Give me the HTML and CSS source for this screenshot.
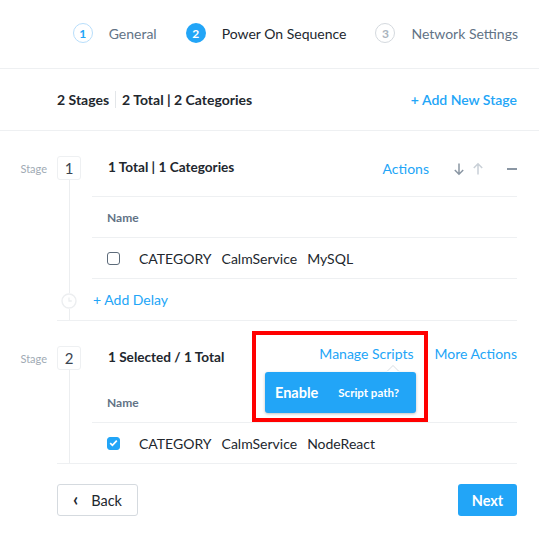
FILE: index.html
```html
<!DOCTYPE html>
<html>
<head>
<meta charset="utf-8">
<link rel="stylesheet" href="styles.css">
</head>
<body>
<header class="steps">
  <div class="step done"><span class="num">1</span><span class="label">General</span></div>
  <div class="step active"><span class="num">2</span><span class="label">Power On Sequence</span></div>
  <div class="step todo"><span class="num">3</span><span class="label">Network Settings</span></div>
</header>

<div class="summary">
  <div class="summary-text"><span class="stages">2 Stages</span><span class="divider"></span><span>2 Total | 2 Categories</span></div>
  <a class="link add-stage">+ Add New Stage</a>
</div>

<section class="stage">
  <div class="stage-label">Stage</div>
  <div class="stage-main">
    <div class="rail rail-top"><span class="stage-num">1</span><span class="vline"></span></div>
    <div class="stage-head head-1">
      <span class="stage-title">1 Total | 1 Categories</span>
      <div class="head-actions">
        <a class="link actions">Actions</a>
        <span class="arrow down">
          <svg width="12" height="14" viewBox="0 0 12 14"><path d="M6 1.5V12M1.8 8l4.2 4.2L10.2 8" fill="none" stroke="#8a96a3" stroke-width="1.5"/></svg>
        </span>
        <span class="arrow up">
          <svg width="12" height="14" viewBox="0 0 12 14"><path d="M6 12.5V2M1.8 6L6 1.8 10.2 6" fill="none" stroke="#c9d0d7" stroke-width="1.5"/></svg>
        </span>
        <span class="minus"></span>
      </div>
    </div>
    <div class="col-head">Name</div>
    <div class="item-row">
      <span class="checkbox"></span>
      <span class="item-text">CATEGORY<span class="sp"></span>CalmService<span class="sp"></span>MySQL</span>
    </div>
    <div class="rail rail-delay">
      <span class="vline short"></span>
      <svg class="clock" width="16" height="16" viewBox="0 0 16 16"><circle cx="8" cy="8" r="7" fill="#fff" stroke="#eceef0" stroke-width="1.4"/><path d="M8 4.5V8h2.8" fill="none" stroke="#eceef0" stroke-width="1.3"/></svg>
      <span class="vline"></span>
    </div>
    <div class="delay-row"><a class="link">+ Add Delay</a></div>
  </div>
</section>

<section class="stage">
  <div class="stage-label">Stage</div>
  <div class="stage-main">
    <div class="rail rail-full"><span class="stage-num">2</span><span class="vline"></span></div>
    <div class="stage-head head-2">
      <span class="stage-title">1 Selected / 1 Total</span>
      <div class="head-actions">
        <a class="link manage">Manage Scripts</a>
        <a class="link more">More Actions</a>
      </div>
      <div class="tooltip">
        <span class="tip-arrow"></span>
        <span class="tip-main">Enable</span>
        <span class="tip-sub">Script path?</span>
      </div>
      <div class="highlight"></div>
    </div>
    <div class="col-head bordered">Name</div>
    <div class="item-row">
      <span class="checkbox checked">
        <svg width="9" height="8" viewBox="0 0 9 8"><path d="M1.2 4.2l2.2 2.1L7.8 1.6" fill="none" stroke="#fff" stroke-width="1.7"/></svg>
      </span>
      <span class="item-text">CATEGORY<span class="sp"></span>CalmService<span class="sp"></span>NodeReact</span>
    </div>
  </div>
</section>

<footer class="footer">
  <button class="btn back"><span class="chev">‹</span>Back</button>
  <button class="btn next">Next</button>
</footer>
</body>
</html>
```

FILE: styles.css
```css
* { box-sizing: border-box; }
html, body { margin: 0; padding: 0; background: #fff; }
body {
  font-family: Lato, "Open Sans", sans-serif;
  color: #22272e;
  font-size: 14px;
  width: 539px;
  height: 534px;
  overflow: hidden;
}
a { text-decoration: none; }
.link { color: #22a5f7; cursor: pointer; }

/* steps */
.steps {
  height: 69px;
  border-bottom: 1px solid #eef0f2;
  display: flex;
  justify-content: flex-end;
  align-items: center;
  padding: 0 21px 2px 0;
  gap: 29px;
}
.step { display: flex; align-items: center; gap: 16px; font-size: 14px; }
.step .num {
  width: 20px; height: 20px; border-radius: 50%;
  display: flex; align-items: center; justify-content: center;
  font-size: 12px; font-weight: 700;
}
.step.done .num { border: 1px solid #b8defb; color: #22a5f7; }
.step.done .label, .step.todo .label { color: #627386; }
.step.active .num { background: #22a5f7; color: #fff; }
.step.active .label { color: #22272e; }
.step.todo .num { border: 1px solid #d4d9de; color: #a9b3bd; }

/* summary */
.summary {
  height: 62px;
  border-bottom: 1px solid #eef0f2;
  display: flex;
  align-items: center;
  justify-content: space-between;
  padding: 0 22px 0 57px;
}
.summary-text { display: flex; align-items: center; font-weight: 700; font-size: 14px; }
.divider { width: 1px; height: 17px; background: #e3e6e9; margin: 0 6px; }
.add-stage { font-size: 14px; font-weight: 600; }

/* stage */
.stage { display: flex; }
.stage-label {
  width: 57px;
  padding: 31px 10px 0 0;
  text-align: right;
  font-size: 11px;
  line-height: 14px;
  color: #a0aab4;
}
.stage-main {
  flex: 1;
  margin-right: 22px;
  border-bottom: 1px solid #eef0f2;
  display: grid;
  grid-template-columns: 35px 1fr;
}
.rail {
  grid-column: 1;
  display: flex;
  flex-direction: column;
  align-items: flex-start;
}
.rail-top { grid-row: 1 / 4; padding-top: 25px; }
.rail-full { grid-row: 1 / 4; padding-top: 25px; }
.rail-delay { grid-row: 4; padding-left: 4px; }
.rail-delay .vline { margin-left: 7.5px; }
.rail-delay .short { flex: 0 0 14px; }
.clock { display: block; flex: none; }
.stage-num {
  width: 24px; height: 24px;
  border: 1px solid #eef0f2;
  border-radius: 3px;
  display: flex; align-items: center; justify-content: center;
  font-size: 15px;
  color: #3a4451;
  flex: none;
}
.vline { flex: 1; width: 1px; background: #eceef0; margin-left: 11.5px; }

.stage-head {
  grid-column: 2;
  position: relative;
  display: flex;
  justify-content: space-between;
  align-items: flex-start;
  padding: 26px 0 0 16px;
  line-height: 20px;
}
.head-1 { height: 66px; border-bottom: 1px solid #eef0f2; }
.head-2 { height: 61px; }
.stage-title { font-weight: 700; font-size: 13.6px; }
.head-actions { display: flex; align-items: center; font-size: 14px; }
.head-1 .head-actions { padding-top: 2px; }
.head-2 .head-actions { margin-top: -3px; gap: 21px; }
.actions { margin-right: 24px; }
.arrow { display: flex; width: 12px; height: 14px; }
.arrow.up { margin-left: 7px; }
.minus { width: 10px; height: 2px; background: #8a96a3; margin-left: 23px; }

.col-head {
  grid-column: 2;
  height: 41px;
  border-bottom: 1px solid #eef0f2;
  display: flex;
  align-items: center;
  padding-left: 15px;
  font-size: 12px;
  font-weight: 700;
  color: #627386;
}
.item-row {
  grid-column: 2;
  height: 41px;
  border-bottom: 1px solid #eef0f2;
  display: flex;
  align-items: center;
  padding-left: 15px;
}
.stage-main .item-row:last-child { border-bottom: none; height: 40px; }
.checkbox {
  width: 13px; height: 13px;
  border: 1.3px solid #5d6b7a;
  border-radius: 3px;
  margin-right: 19px;
  display: flex; align-items: center; justify-content: center;
}
.checkbox.checked { background: #22a5f7; border-color: #22a5f7; }
.item-text { font-size: 14px; color: #22272e; }
.sp { display: inline-block; width: 10px; }

.delay-row {
  grid-column: 2;
  grid-row: 4;
  height: 41px;
  display: flex;
  align-items: center;
  padding-left: 1px;
  font-size: 14px;
}

/* tooltip & highlight */
.tooltip {
  position: absolute;
  left: 173px;
  top: 51px;
  width: 151px;
  height: 41px;
  background: #22a5f7;
  border-radius: 3px;
  box-shadow: 0 1px 3px rgba(0, 0, 0, 0.25);
  display: flex;
  align-items: center;
  padding-left: 10px;
  color: #fff;
  font-weight: 700;
}
.tip-arrow {
  position: absolute;
  top: -6px;
  left: 122px;
  width: 0; height: 0;
  border-left: 6px solid transparent;
  border-right: 6px solid transparent;
  border-bottom: 6px solid #fff;
  filter: drop-shadow(0 -1px 0 #d8dde2);
}
.tip-main { font-size: 14.5px; margin-right: 20px; }
.tip-sub { font-size: 11.5px; }
.highlight {
  position: absolute;
  left: 160px;
  top: 10px;
  width: 176px;
  height: 91px;
  border: 4px solid #ff0000;
  pointer-events: none;
}

/* footer */
.footer {
  display: flex;
  justify-content: space-between;
  padding: 20px 22px 0 57px;
}
.btn {
  height: 32px;
  border-radius: 3px;
  font-family: inherit;
  font-size: 14.5px;
  display: flex;
  align-items: center;
}
.back {
  width: 81px;
  background: #fff;
  border: 1px solid #d5dadf;
  color: #22272e;
  padding: 0 0 0 15px;
}
.chev { font-size: 18px; font-weight: 700; margin-right: 13px; line-height: 1; position: relative; top: -1px; }
.next {
  width: 59px;
  background: #22a5f7;
  border: none;
  color: #fff;
  font-weight: 700;
  justify-content: center;
}
```
